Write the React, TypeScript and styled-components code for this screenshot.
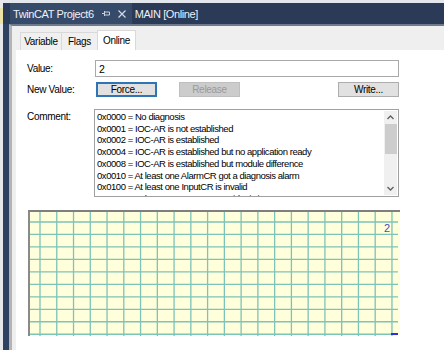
import styled, { createGlobalStyle } from 'styled-components'

const GlobalStyle = createGlobalStyle`
  html, body {
    margin: 0;
    padding: 0;
    background: #ffffff;
  }
  body {
    font-family: "Liberation Sans", Arial, sans-serif;
    font-size: 10px;
    color: #000;
  }
`

const Screen = styled.div`
  width: 444px;
  height: 350px;
  display: flex;
  overflow: hidden;
  background: #ffffff;
`

const EdgeStrip = styled.div`
  width: 3px;
  display: flex;
  flex-direction: column;
  background: #e6e8ec;
`

const EdgeMark = styled.div`
  margin-top: 8px;
  height: 16px;
  background: #ece2a6;
`

const Workspace = styled.div`
  flex: 1;
  display: flex;
  flex-direction: column;
  min-width: 0;
`

const DocBar = styled.div`
  height: 21px;
  margin-top: 3px;
  padding-left: 7px;
  background: #2a3a57;
  display: flex;
  align-items: stretch;
  box-shadow: 0 -3px 0 #e3e6ec;
`

const DocTab = styled.div<{ $active?: boolean }>`
  display: flex;
  align-items: center;
  gap: 8px;
  padding: 0 6px 0 3px;
  background: ${(p) => (p.$active ? '#364a6a' : 'transparent')};
  color: #eef1f6;
  font-size: 11px;
  letter-spacing: -0.4px;
  white-space: nowrap;
`

const TabIcons = styled.span`
  display: flex;
  align-items: center;
  gap: 8px;
`

const BodyRow = styled.div`
  flex: 1;
  display: flex;
  min-height: 0;
`

const NavyRail = styled.div`
  width: 6px;
  background: #2e4163;
`

const Frame = styled.div`
  flex: 1;
  display: flex;
  flex-direction: column;
  border-top: 2px solid #6d7b8c;
  border-left: 3px solid #b4b4b4;
  background: #efefef;
  padding-left: 4px;
  min-width: 0;
`

const TabStrip = styled.div`
  display: flex;
  align-items: flex-end;
  height: 24px;
  padding-left: 5px;
`

const PageTab = styled.div<{ $selected?: boolean; $w: number }>`
  width: ${(p) => p.$w}px;
  height: ${(p) => (p.$selected ? '19px' : '17px')};
  display: flex;
  align-items: center;
  justify-content: center;
  background: ${(p) => (p.$selected ? '#ffffff' : '#f0f0f0')};
  border: 1px solid #d9d9d9;
  border-bottom: none;
  margin-left: -1px;
  font-size: 10px;
  letter-spacing: -0.3px;
  color: #000;
`

const Page = styled.div`
  flex: 1;
  background: #ffffff;
  padding: 10px 45px 0 11px;
  display: flex;
  flex-direction: column;
`

const FormGrid = styled.div`
  display: grid;
  grid-template-columns: 68px 1fr;
  row-gap: 5px;
  align-items: center;
`

const Label = styled.div<{ $top?: boolean }>`
  align-self: ${(p) => (p.$top ? 'start' : 'center')};
  padding-top: ${(p) => (p.$top ? '14px' : '0')};
  font-size: 10px;
  letter-spacing: -0.3px;
`

const TextBox = styled.div`
  height: 15px;
  border: 1px solid #a9a9a9;
  padding: 0 3px;
  display: flex;
  align-items: center;
  font-size: 10.5px;
`

const ButtonRow = styled.div`
  display: flex;
  align-items: center;
  gap: 22px;
  padding-left: 1px;
`

const Button = styled.div<{ $focus?: boolean; $disabled?: boolean }>`
  width: 59px;
  height: 13px;
  display: flex;
  align-items: center;
  justify-content: center;
  font-size: 10px;
  letter-spacing: -0.3px;
  background: ${(p) => (p.$disabled ? '#cccccc' : '#e1e1e1')};
  color: ${(p) => (p.$disabled ? '#9a9a9a' : '#000')};
  border: 1px solid ${(p) => (p.$focus ? '#2f74b5' : p.$disabled ? '#bfbfbf' : '#adadad')};
  box-shadow: ${(p) => (p.$focus ? 'inset 0 0 0 1px #2f74b5' : 'none')};
`

const Spacer = styled.div`
  flex: 1;
`

const CommentBox = styled.div`
  margin-top: 12px;
  height: 86px;
  border: 1px solid #a0a0a0;
  display: flex;
  margin-left: -1px;
`

const CommentText = styled.div`
  flex: 1;
  padding: 1px 0 0 2px;
  overflow: hidden;
  font-size: 9.5px;
  letter-spacing: -0.45px;
  line-height: 11.7px;
  white-space: nowrap;
`

const ScrollBar = styled.div`
  width: 13px;
  margin: 1px 1px 1px 0;
  background: #f0f0f0;
  display: flex;
  flex-direction: column;
  align-items: center;
`

const Arrow = styled.div`
  height: 13px;
  display: flex;
  align-items: center;
  justify-content: center;
`

const Thumb = styled.div`
  width: 12px;
  height: 30px;
  background: #cdcdcd;
`

const ChartWrap = styled.div`
  margin-top: 13px;
  margin-left: 1px;
  width: 370px;
  height: 124px;
  border-top: 2px solid #7f7f7f;
  border-left: 2px solid #8a8a8a;
  background: #ffffdc;
  display: flex;
`

const lines = [
  '0x0000 = No diagnosis',
  '0x0001 = IOC-AR is not established',
  '0x0002 = IOC-AR is established',
  '0x0004 = IOC-AR is established but no application ready',
  '0x0008 = IOC-AR is established but module difference',
  '0x0010 = At least one AlarmCR got a diagnosis alarm',
  '0x0100 = At least one InputCR is invalid',
  '0x0200 = At least one InputCR Provider is in stop',
]

function Chevron({ up }: { up?: boolean }) {
  return (
    <svg width="7" height="5" viewBox="0 0 7 5">
      <path
        d={up ? 'M0.5 4 L3.5 1 L6.5 4' : 'M0.5 1 L3.5 4 L6.5 1'}
        fill="none"
        stroke="#606060"
        strokeWidth="1.3"
      />
    </svg>
  )
}

function Chart() {
  const w = 368
  const h = 124
  const vs = Array.from({ length: 22 }, (_, k) => 10 + 16.76 * k)
  const hs = Array.from({ length: 10 }, (_, k) => 10 + 12.47 * k)
  return (
    <svg width={w} height={h} viewBox={`0 0 ${w} ${h}`}>
      {vs.map((x, i) => (
        <line key={'v' + i} x1={x} y1={0} x2={x} y2={h} stroke="#7cc3b8" strokeWidth="1.3" />
      ))}
      {hs.map((y, i) => (
        <line key={'h' + i} x1={0} y1={y} x2={w} y2={y} stroke="#7cc3b8" strokeWidth="1.3" />
      ))}
      <text x={354} y={20} fontSize="11" fill="#4b49b8" fontFamily="Liberation Sans, Arial, sans-serif">
        2
      </text>
      <rect x={361} y={121} width={7} height={2} fill="#2e2ee0" />
    </svg>
  )
}

export default function App() {
  return (
    <>
      <GlobalStyle />
      <Screen>
        <EdgeStrip>
          <EdgeMark />
        </EdgeStrip>
        <Workspace>
          <DocBar>
            <DocTab $active>
              TwinCAT Project6
              <TabIcons>
                <svg width="8" height="9" viewBox="0 0 8 9">
                  <path d="M0 4.5 H2.5 M2.5 2 V7 M2.5 3 H7.5 V6 H2.5" fill="none" stroke="#c9d1dd" strokeWidth="1" />
                </svg>
                <svg width="8" height="8" viewBox="0 0 8 8">
                  <path d="M0.5 0.5 L7.5 7.5 M7.5 0.5 L0.5 7.5" stroke="#d5dbe4" strokeWidth="1.2" />
                </svg>
              </TabIcons>
            </DocTab>
            <DocTab>MAIN [Online]</DocTab>
          </DocBar>
          <BodyRow>
            <NavyRail />
            <Frame>
              <TabStrip>
                <PageTab $w={40}>Variable</PageTab>
                <PageTab $w={35}>Flags</PageTab>
                <PageTab $w={37} $selected>
                  Online
                </PageTab>
              </TabStrip>
              <Page>
                <FormGrid>
                  <Label>Value:</Label>
                  <TextBox>2</TextBox>
                  <Label>New Value:</Label>
                  <ButtonRow>
                    <Button $focus>Force...</Button>
                    <Button $disabled>Release</Button>
                    <Spacer />
                    <Button>Write...</Button>
                  </ButtonRow>
                </FormGrid>
                <FormGrid>
                  <Label $top>Comment:</Label>
                  <CommentBox>
                    <CommentText>
                      {lines.map((l) => (
                        <div key={l}>{l}</div>
                      ))}
                    </CommentText>
                    <ScrollBar>
                      <Arrow>
                        <Chevron up />
                      </Arrow>
                      <Thumb />
                      <Spacer />
                      <Arrow>
                        <Chevron />
                      </Arrow>
                    </ScrollBar>
                  </CommentBox>
                </FormGrid>
                <ChartWrap>
                  <Chart />
                </ChartWrap>
              </Page>
            </Frame>
          </BodyRow>
        </Workspace>
      </Screen>
    </>
  )
}
